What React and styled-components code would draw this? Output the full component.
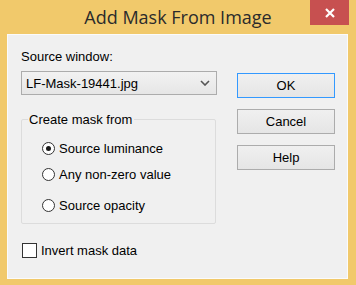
import React from "react";
import styled, { createGlobalStyle } from "styled-components";

const GlobalStyle = createGlobalStyle`
  html, body {
    margin: 0;
    padding: 0;
    background: #f1c96b;
  }
  body {
    font-family: "Liberation Sans", Arial, sans-serif;
  }
`;

const Window = styled.div`
  width: 356px;
  height: 285px;
  display: flex;
  flex-direction: column;
  background: #f1c96b;
  box-sizing: border-box;
  padding: 0 8px 6px 7px;
`;

const TitleBar = styled.div`
  height: 34px;
  display: grid;
  grid-template-columns: 1fr auto 1fr;
  align-items: start;
  margin: 0 -8px 0 -7px;
`;

const Title = styled.div`
  grid-column: 2;
  font-family: "Open Sans", "Noto Sans", sans-serif;
  font-size: 18px;
  line-height: 34px;
  color: #2b2b2b;
  margin-top: 0;
`;

const CloseButton = styled.div`
  grid-column: 3;
  justify-self: end;
  width: 39px;
  height: 25px;
  margin-right: 7px;
  background: #c75050;
  display: flex;
  align-items: center;
  justify-content: center;
`;

const Content = styled.div`
  flex: 1;
  background: #f0f0f0;
  box-shadow: inset 0 0 0 1px #fbfbfb;
  display: grid;
  grid-template-columns: 196px 98px;
  column-gap: 20px;
  align-items: start;
  padding: 15px 13px 0 14px;
`;

const LeftColumn = styled.div`
  display: flex;
  flex-direction: column;
`;

const Label = styled.div`
  font-size: 13px;
  line-height: 15px;
  color: #000;
`;

const Select = styled.div`
  margin-top: 7px;
  height: 22px;
  border: 1px solid #acacac;
  background: linear-gradient(#f2f2f2, #e6e6e6);
  display: flex;
  align-items: center;
  justify-content: space-between;
  padding: 0 6px 0 4px;
  font-size: 13px;
  color: #000;
`;

const GroupBox = styled.fieldset`
  margin: 17px 1px 0 0;
  border: 1px solid #dcdcdc;
  border-radius: 2px;
  padding: 5px 0 8px 0;
  height: 112px;
  box-sizing: border-box;
  display: flex;
  flex-direction: column;
`;

const Legend = styled.legend`
  font-size: 13px;
  line-height: 15px;
  padding: 0 2px 0 1px;
  margin-left: 6px;
  color: #000;
`;

const RadioRow = styled.div`
  display: flex;
  align-items: center;
  gap: 4px;
  height: 20px;
  margin-top: ${(p) => p.$gap}px;
  margin-left: 20px;
  font-size: 13px;
  color: #000;
`;

const RadioCircle = styled.span`
  width: 13px;
  height: 13px;
  box-sizing: border-box;
  border: 1px solid #333;
  border-radius: 50%;
  background: #fff;
  display: flex;
  align-items: center;
  justify-content: center;
  &::after {
    content: "";
    width: 5px;
    height: 5px;
    border-radius: 50%;
    background: ${(p) => (p.$checked ? "#1a1a1a" : "transparent")};
  }
`;

const CheckRow = styled.div`
  display: flex;
  align-items: center;
  gap: 4px;
  margin-top: 19px;
  margin-left: 1px;
  font-size: 13px;
  color: #000;
`;

const CheckBox = styled.span`
  width: 15px;
  height: 15px;
  box-sizing: border-box;
  border: 1px solid #333;
  background: #fff;
`;

const ButtonColumn = styled.div`
  margin-top: 24px;
  display: flex;
  flex-direction: column;
  gap: 11px;
`;

const Button = styled.div`
  height: 25px;
  box-sizing: border-box;
  border: 1px solid ${(p) => (p.$focused ? "#3399ff" : "#acacac")};
  background: linear-gradient(#f0f0f0, #e5e5e5);
  display: flex;
  align-items: center;
  justify-content: center;
  font-size: 13px;
  color: #000;
`;

const radios = [
  { label: "Source luminance", checked: true, gap: 6 },
  { label: "Any non-zero value", checked: false, gap: 6 },
  { label: "Source opacity", checked: false, gap: 11 },
];

const App = () => {
  return (
    <>
      <GlobalStyle />
      <Window>
        <TitleBar>
          <Title>Add Mask From Image</Title>
          <CloseButton>
            <svg width="10" height="10" viewBox="0 0 10 10">
              <path d="M1 1 L9 9 M9 1 L1 9" stroke="#fff" strokeWidth="2.2" />
            </svg>
          </CloseButton>
        </TitleBar>

        <Content>
          <LeftColumn>
            <Label>Source window:</Label>
            <Select>
              <span>LF-Mask-19441.jpg</span>
              <svg width="10" height="6" viewBox="0 0 10 6">
                <path d="M1 1 L5 5 L9 1" fill="none" stroke="#555" strokeWidth="1.6" />
              </svg>
            </Select>

            <GroupBox>
              <Legend>Create mask from</Legend>
              {radios.map((r) => (
                <RadioRow key={r.label} $gap={r.gap}>
                  <RadioCircle $checked={r.checked} />
                  {r.label}
                </RadioRow>
              ))}
            </GroupBox>

            <CheckRow>
              <CheckBox />
              Invert mask data
            </CheckRow>
          </LeftColumn>

          <ButtonColumn>
            <Button $focused>OK</Button>
            <Button>Cancel</Button>
            <Button>Help</Button>
          </ButtonColumn>
        </Content>
      </Window>
    </>
  );
};

export default App;
